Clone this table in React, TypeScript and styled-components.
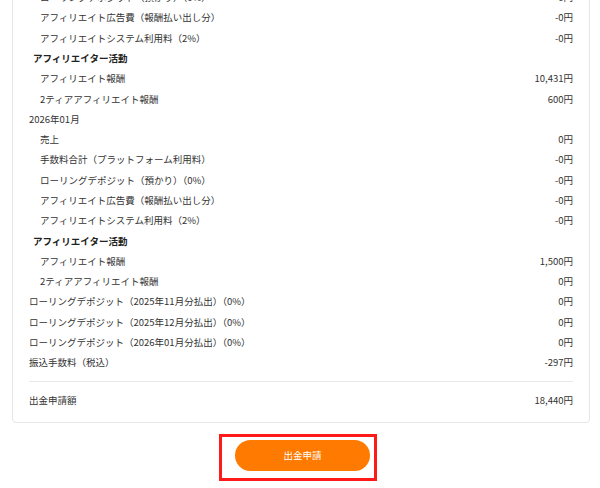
import React from "react";
import styled, { createGlobalStyle } from "styled-components";

const Global = createGlobalStyle`
  html, body { margin: 0; padding: 0; background: #fff; }
  body {
    font-family: "Noto Sans CJK JP", "Noto Sans", sans-serif;
    color: #333;
    -webkit-font-smoothing: antialiased;
  }
`;

const Page = styled.div`
  margin-top: -91px;
  padding: 0 10px 0 12px;
`;

const Card = styled.div`
  border: 1px solid #e6e6e6;
  border-radius: 4px;
  padding: 16px 16px 12px 16px;
`;

const Row = styled.div<{ $indent: number; $bold?: boolean }>`
  display: flex;
  justify-content: space-between;
  align-items: center;
  height: 20.3px;
  padding-left: ${(p) => p.$indent}px;
  font-size: 9.5px;
  font-weight: ${(p) => (p.$bold ? 700 : 400)};
  color: ${(p) => (p.$bold ? "#222" : "#333")};
`;

const Value = styled.span`
  font-size: 9.5px;
  color: #333;
`;

const Total = styled.div`
  margin-top: 8px;
  border-top: 1px solid #e8e8e8;
  padding-top: 8px;
  display: flex;
  justify-content: space-between;
  align-items: center;
  height: 20px;
  font-size: 9.5px;
`;

const ActionArea = styled.div`
  display: flex;
  justify-content: center;
  padding: 11px 6px 0 0;
`;

const Highlight = styled.div`
  border: 3px solid #ff1a1a;
  padding: 3px 4px 7px 13px;
`;

const Button = styled.button`
  width: 135px;
  height: 31px;
  border: none;
  border-radius: 16px;
  background: #ff7a00;
  color: #fff;
  font-family: "Noto Sans CJK JP", sans-serif;
  font-size: 9.5px;
  cursor: pointer;
`;

type Item = { label: string; value?: string; indent: number; bold?: boolean };

const month = (m: string, vals: string[], rep: string, tier: string): Item[] => [
  { label: m, indent: 0 },
  { label: "売上", value: vals[0], indent: 11 },
  { label: "手数料合計（プラットフォーム利用料）", value: vals[1], indent: 11 },
  { label: "ローリングデポジット（預かり）（0%）", value: vals[2], indent: 11 },
  { label: "アフィリエイト広告費（報酬払い出し分）", value: vals[3], indent: 11 },
  { label: "アフィリエイトシステム利用料（2%）", value: vals[4], indent: 11 },
  { label: "アフィリエイター活動", indent: 4, bold: true },
  { label: "アフィリエイト報酬", value: rep, indent: 11 },
  { label: "2ティアアフィリエイト報酬", value: tier, indent: 11 },
];

const items: Item[] = [
  ...month("2025年12月", ["0円", "-0円", "-0円", "-0円", "-0円"], "10,431円", "600円"),
  ...month("2026年01月", ["0円", "-0円", "-0円", "-0円", "-0円"], "1,500円", "0円"),
  { label: "ローリングデポジット（2025年11月分払出）（0%）", value: "0円", indent: 0 },
  { label: "ローリングデポジット（2025年12月分払出）（0%）", value: "0円", indent: 0 },
  { label: "ローリングデポジット（2026年01月分払出）（0%）", value: "0円", indent: 0 },
  { label: "振込手数料（税込）", value: "-297円", indent: 0 },
];

export default function App() {
  return (
    <>
      <Global />
      <Page>
        <Card>
          {items.map((it, i) => (
            <Row key={i} $indent={it.indent} $bold={it.bold}>
              <span>{it.label}</span>
              {it.value && <Value>{it.value}</Value>}
            </Row>
          ))}
          <Total>
            <span>出金申請額</span>
            <Value>18,440円</Value>
          </Total>
        </Card>
        <ActionArea>
          <Highlight>
            <Button>出金申請</Button>
          </Highlight>
        </ActionArea>
      </Page>
    </>
  );
}
